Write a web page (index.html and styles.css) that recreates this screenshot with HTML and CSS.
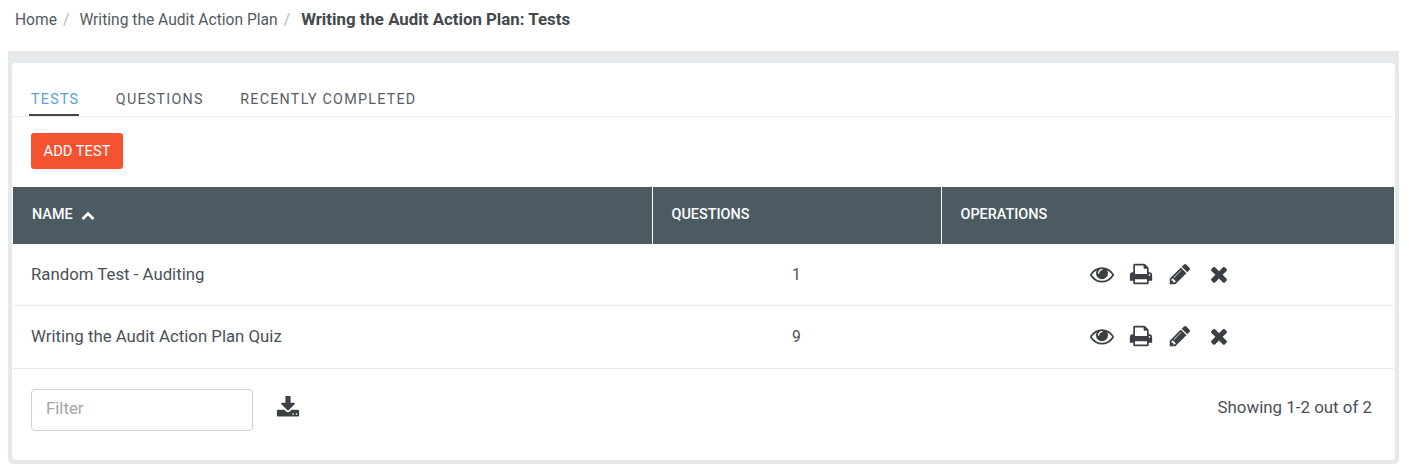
FILE: index.html
```html
<!DOCTYPE html>
<html lang="en">
<head>
<meta charset="utf-8">
<title>Writing the Audit Action Plan: Tests</title>
<link rel="stylesheet" href="styles.css">
</head>
<body>
<svg class="defs" width="0" height="0" aria-hidden="true">
  <symbol id="i-eye" viewBox="0 0 1792 1792"><path d="M1664 960q-152-236-381-353 61 104 61 225 0 185-131.500 316.500t-316.500 131.500-316.500-131.500-131.500-316.500q0-121 61-225-229 117-381 353 133 205 333.500 326.500t434.500 121.500 434.500-121.500 333.500-326.500zm-720-384q0-20-14-34t-34-14q-125 0-214.500 89.500t-89.500 214.500q0 20 14 34t34 14 34-14 14-34q0-86 61-147t147-61q20 0 34-14t14-34zm848 384q0 34-20 69-140 230-376.500 368.500t-499.500 138.500-499.500-139-376.500-368q-20-35-20-69t20-69q140-229 376.500-368t499.500-139 499.500 139 376.500 368q20 35 20 69z"/></symbol>
  <symbol id="i-print" viewBox="0 0 1792 1792"><path d="M448 1536h896v-256h-896v256zm0-640h896v-384h-160q-40 0-68-28t-28-68v-160h-640v640zm1152 64q0-26-19-45t-45-19-45 19-19 45 19 45 45 19 45-19 19-45zm128 0v416q0 13-9.500 22.500t-22.500 9.500h-224v160q0 40-28 68t-68 28h-960q-40 0-68-28t-28-68v-160h-224q-13 0-22.500-9.500t-9.500-22.500v-416q0-79 56.500-135.500t135.500-56.500h64v-544q0-40 28-68t68-28h672q40 0 88 20t76 48l152 152q28 28 48 76t20 88v256h64q79 0 135.500 56.500t56.500 135.500z"/></symbol>
  <symbol id="i-pencil" viewBox="0 0 1792 1792"><path d="M491 1536l91-91-235-235-91 91v107h128v128h107zm523-928q0-22-22-22-10 0-17 7l-542 542q-7 7-7 17 0 22 22 22 10 0 17-7l542-542q7-7 7-17zm-54-192l416 416-832 832h-416v-416zm683 96q0 53-37 90l-166 166-416-416 166-165q36-38 90-38 53 0 91 38l235 234q37 39 37 91z"/></symbol>
  <symbol id="i-times" viewBox="0 0 1792 1792"><path d="M1490 1322q0 40-28 68l-136 136q-28 28-68 28t-68-28l-294-294-294 294q-28 28-68 28t-68-28l-136-136q-28-28-28-68t28-68l294-294-294-294q-28-28-28-68t28-68l136-136q28-28 68-28t68 28l294 294 294-294q28-28 68-28t68 28l136 136q28 28 28 68t-28 68l-294 294 294 294q28 28 28 68z"/></symbol>
  <symbol id="i-download" viewBox="0 0 1792 1792"><path d="M1344 1344q0-26-19-45t-45-19-45 19-19 45 19 45 45 19 45-19 19-45zm256 0q0-26-19-45t-45-19-45 19-19 45 19 45 45 19 45-19 19-45zm128-224v320q0 40-28 68t-68 28h-1472q-40 0-68-28t-28-68v-320q0-40 28-68t68-28h465l135 136q58 56 136 56t136-56l136-136h464q40 0 68 28t28 68zm-325-569q17 41-14 70l-448 448q-18 19-45 19t-45-19l-448-448q-31-29-14-70 17-39 59-39h256v-448q0-26 19-45t45-19h256q26 0 45 19t19 45v448h256q42 0 59 39z"/></symbol>
  <symbol id="i-up" viewBox="0 0 1792 1792"><path d="M1683 1331l-166 165q-19 19-45 19t-45-19l-531-531-531 531q-19 19-45 19t-45-19l-166-165q-19-19-19-45.500t19-45.500l742-741q19-19 45-19t45 19l742 741q19 19 19 45.500t-19 45.500z"/></symbol>
</svg>

<nav class="crumbs">
  <a class="crumb">Home</a><span class="sep">/</span>
  <a class="crumb">Writing the Audit Action Plan</a><span class="sep">/</span>
  <strong class="crumb-current">Writing the Audit Action Plan: Tests</strong>
</nav>

<main class="panel">
  <section class="card">
    <ul class="tabs">
      <li class="tab tab-active">TESTS</li>
      <li class="tab">QUESTIONS</li>
      <li class="tab">RECENTLY COMPLETED</li>
    </ul>
    <div class="toolbar">
      <button class="btn-add" type="button">ADD TEST</button>
    </div>
    <table class="grid">
      <colgroup>
        <col class="col-name"><col class="col-questions"><col class="col-ops">
      </colgroup>
      <thead>
        <tr>
          <th>NAME <svg class="sort-icon"><use href="#i-up"/></svg></th>
          <th>QUESTIONS</th>
          <th>OPERATIONS</th>
        </tr>
      </thead>
      <tbody>
        <tr class="row-first">
          <td>Random Test - Auditing</td>
          <td class="num">1</td>
          <td>
            <div class="ops">
              <svg class="op"><use href="#i-eye"/></svg>
              <svg class="op"><use href="#i-print"/></svg>
              <svg class="op"><use href="#i-pencil"/></svg>
              <svg class="op"><use href="#i-times"/></svg>
            </div>
          </td>
        </tr>
        <tr class="row-second">
          <td>Writing the Audit Action Plan Quiz</td>
          <td class="num">9</td>
          <td>
            <div class="ops">
              <svg class="op"><use href="#i-eye"/></svg>
              <svg class="op"><use href="#i-print"/></svg>
              <svg class="op"><use href="#i-pencil"/></svg>
              <svg class="op"><use href="#i-times"/></svg>
            </div>
          </td>
        </tr>
      </tbody>
    </table>
    <footer class="foot">
      <input class="filter" type="text" placeholder="Filter">
      <svg class="download"><use href="#i-download"/></svg>
      <span class="count">Showing 1-2 out of 2</span>
    </footer>
  </section>
</main>
</body>
</html>
```

FILE: styles.css
```css
* { box-sizing: border-box; }

html, body { margin: 0; padding: 0; }

body {
  background: #fff;
  color: #4b4f56;
  font-family: Roboto, "Liberation Sans", sans-serif;
  font-size: 15.6px;
  width: 1409px;
  height: 471px;
  overflow: hidden;
}

.defs { display: block; height: 0; }

.crumbs {
  height: 51px;
  padding: 10px 0 0 15px;
  line-height: 18px;
  display: flex;
  align-items: baseline;
  color: #555a60;
}

.sep { color: #b5b8bc; margin: 0 10px 0 6px; }

.crumb-current {
  color: #44484d;
  font-size: 16.85px;
  font-weight: 700;
  margin-left: 1px;
}

.panel {
  margin: 0 10px 0 8px;
  padding: 12px 4px 3px 4px;
  background: #e6e9ec;
  border-radius: 0 0 5px 5px;
  height: 413px;
}

.card {
  background: #fff;
  border-radius: 4px;
  height: 397px;
}

.tabs {
  list-style: none;
  margin: 0;
  padding: 0 0 0 19px;
  display: flex;
  gap: 36.5px;
  height: 54px;
  border-bottom: 1px solid #eceef0;
}

.tab {
  padding-top: 28px;
  height: 53px;
  font-size: 14.3px;
  line-height: 17px;
  letter-spacing: 1.25px;
  color: #5a5e63;
}

.tab-active {
  margin-left: -2px;
  padding-left: 2px;
  color: #5a9fd4;
  border-bottom: 2px solid #444;
}

.toolbar { padding: 16px 0 19px 19px; height: 70px; }

.btn-add {
  display: block;
  width: 92px;
  height: 36px;
  border: 0;
  border-radius: 3px;
  background: #f55330;
  color: #fff;
  font: 400 14.7px Roboto, sans-serif;
  padding: 0;
}

.grid {
  width: calc(100% - 2px);
  margin: 0 1px;
  border-collapse: collapse;
  table-layout: fixed;
}

.col-name { width: 639px; }
.col-questions { width: 289px; }

.grid th {
  height: 57px;
  padding: 0 19px 2px;
  background: #4c5b62;
  color: #fff;
  font-size: 14.4px;
  font-weight: 500;
  text-align: left;
  border-left: 1px solid #fff;
}

.grid th:first-child { border-left: 0; }

.sort-icon {
  width: 14px;
  height: 14px;
  fill: #fff;
  vertical-align: -3px;
  margin-left: 5px;
}

.grid td {
  padding: 0 18px;
  font-size: 16.8px;
  color: #4b4f56;
  border-bottom: 1px solid #e8eaec;
}

.row-first td { height: 61px; }

.row-second td { height: 63px; padding-bottom: 1px; }

.grid td.num { text-align: center; font-size: 15.6px; padding-top: 2px; }

.ops {
  display: flex;
  gap: 15px;
  padding-left: 131px;
}

.op { width: 24px; height: 24px; fill: #3c4045; }

.foot {
  display: flex;
  align-items: flex-start;
  padding: 20px 23px 0 19px;
}

.filter {
  width: 222px;
  height: 42px;
  border: 1px solid #cfd1d4;
  border-radius: 4px;
  padding: 0 14px 3px;
  font: 16.8px Roboto, sans-serif;
  color: #4b4f56;
}

.filter::placeholder { color: #a3a6aa; opacity: 1; }

.download {
  width: 24px;
  height: 24px;
  margin: 7px 0 0 23px;
  fill: #3c4045;
}

.count {
  margin-left: auto;
  margin-top: 8px;
  font-size: 16.9px;
  line-height: 20px;
  color: #4b4f56;
}
```
